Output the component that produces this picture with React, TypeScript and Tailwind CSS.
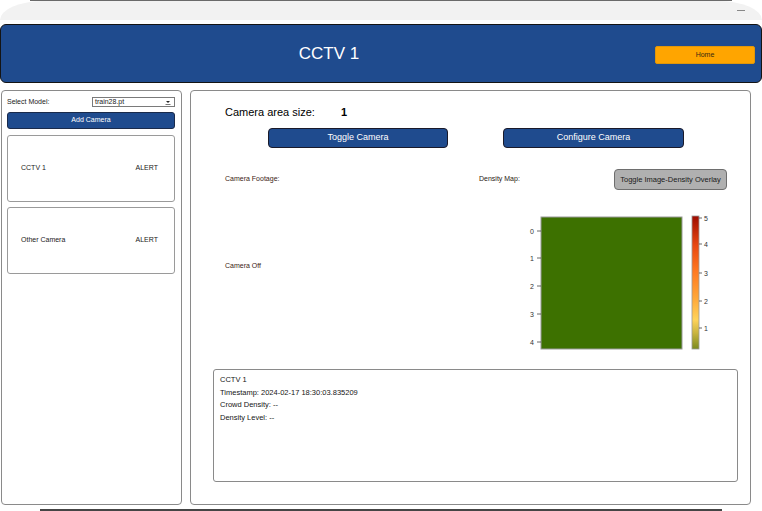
import React from 'react';

const CAMERAS = [
  { name: 'CCTV 1', status: 'ALERT' },
  { name: 'Other Camera', status: 'ALERT' },
];

const INFO_LINES = [
  'CCTV 1',
  'Timestamp: 2024-02-17 18:30:03.835209',
  'Crowd Density: --',
  'Density Level: --',
];

function DensityHeatmap() {
  const rowTicks = [
    { label: '0', y: 41 },
    { label: '1', y: 68 },
    { label: '2', y: 96 },
    { label: '3', y: 124 },
    { label: '4', y: 152 },
  ];
  const barTicks = [
    { label: '5', y: 28 },
    { label: '4', y: 54 },
    { label: '3', y: 83 },
    { label: '2', y: 111 },
    { label: '1', y: 138 },
  ];
  return (
    <svg width="271" height="175" viewBox="0 0 271 175" className="block">
      <defs>
        <linearGradient id="cbar" x1="0" y1="1" x2="0" y2="0">
          <stop offset="0%" stopColor="#7a8a1e" />
          <stop offset="12%" stopColor="#c9b440" />
          <stop offset="22%" stopColor="#ffd35a" />
          <stop offset="38%" stopColor="#ffa83a" />
          <stop offset="58%" stopColor="#ff7a22" />
          <stop offset="78%" stopColor="#e84812" />
          <stop offset="100%" stopColor="#9e0c00" />
        </linearGradient>
      </defs>

      {/* image */}
      <rect x="62" y="27" width="141" height="132" fill="#3d7100" stroke="#9a9a9a" strokeWidth="1" />
      {rowTicks.map((t) => (
        <g key={t.label}>
          <line x1="58" y1={t.y} x2="62" y2={t.y} stroke="#444" strokeWidth="0.8" />
          <text x="55" y={t.y + 2.5} fontSize="7" fill="#333" textAnchor="end" fontFamily="Liberation Sans, sans-serif">
            {t.label}
          </text>
        </g>
      ))}

      {/* colorbar */}
      <rect x="213" y="26" width="7" height="133" fill="url(#cbar)" stroke="#9a9a9a" strokeWidth="0.8" />
      {barTicks.map((t) => (
        <g key={t.label}>
          <line x1="220" y1={t.y} x2="223" y2={t.y} stroke="#444" strokeWidth="0.8" />
          <text x="225" y={t.y + 2.5} fontSize="7" fill="#333" fontFamily="Liberation Sans, sans-serif">
            {t.label}
          </text>
        </g>
      ))}
    </svg>
  );
}

export default function App() {
  return (
    <div className="w-[762px] h-[511px] bg-white overflow-hidden flex flex-col font-['Liberation_Sans',Arial,sans-serif] text-[#1a1a1a]">
      {/* window edge */}
      <div className="h-px mx-[30px] bg-[#6a6a6a]" />
      {/* title bar */}
      <div className="h-[19px] bg-[#f2f2f2] rounded-tl-[44px_19px] rounded-tr-[44px_19px] flex items-center justify-end pr-[17px]">
        <div className="w-[8px] h-px bg-[#888]" />
      </div>

      {/* header */}
      <div className="mt-[4px] h-[59px] bg-[#1f4b8e] border border-[#141414] rounded-[6px] flex items-center">
        <div className="flex-1 text-center text-white text-[17px] pl-[2px]">CCTV 1</div>
        <button className="w-[100px] h-[18px] mr-[6px] mt-[2px] bg-[#ffa500] border border-[#e0960a] rounded-[2px] text-[7px] leading-[16px] text-[#3a2a10] flex items-center justify-center">
          Home
        </button>
      </div>

      {/* body */}
      <div className="mt-[7px] h-[415px] flex">
        {/* sidebar */}
        <div className="ml-[1px] w-[181px] border border-[#8a8a8a] rounded-[4px] pl-[5px] pr-[6px] pt-[6px] flex flex-col">
          <div className="h-[10px] flex items-center text-[7px]">
            <span className="w-[85px]">Select Model:</span>
            <div className="flex-1 h-[10px] border border-[#7a7a7a] flex items-center pl-[2px] pr-[3px] bg-white">
              <span className="flex-1">train28.pt</span>
              <svg width="6" height="5" viewBox="0 0 6 5">
                <path d="M1 1h4L3 3z" fill="#222" />
                <line x1="0.5" y1="4.5" x2="5.5" y2="4.5" stroke="#555" strokeWidth="0.8" />
              </svg>
            </div>
          </div>
          <button className="mt-[5px] h-[17px] bg-[#1f4b8e] border border-[#1a2a4a] rounded-[3px] text-white text-[7px] flex items-center justify-center">
            Add Camera
          </button>
          <div className="mt-[6px] flex flex-col gap-[5px]">
            {CAMERAS.map((c) => (
              <div
                key={c.name}
                className="h-[67px] border border-[#9a9a9a] rounded-[3px] flex items-center justify-between pl-[13px] pr-[16px] text-[7px]"
              >
                <span>{c.name}</span>
                <span>{c.status}</span>
              </div>
            ))}
          </div>
        </div>

        {/* main panel */}
        <div className="ml-[8px] w-[561px] border border-[#8a8a8a] rounded-[4px] pt-[14px] flex flex-col">
          <div className="h-[14px] pl-[34px] flex items-center text-[11px] text-black">
            <span className="w-[116px]">Camera area size:</span>
            <span className="font-bold">1</span>
          </div>

          <div className="mt-[9px] h-[20px] flex pl-[77px] gap-[55px]">
            <button className="w-[180px] h-[20px] bg-[#1f4b8e] border border-[#1a1a2a] rounded-[4px] text-white text-[9px] flex items-center justify-center">
              Toggle Camera
            </button>
            <button className="w-[181px] h-[20px] bg-[#1f4b8e] border border-[#1a1a2a] rounded-[4px] text-white text-[9px] flex items-center justify-center">
              Configure Camera
            </button>
          </div>

          <div className="mt-[21px] h-[200px] flex">
            <div className="w-[288px] pl-[34px] flex flex-col text-[7px] text-[#3b2314]">
              <div className="h-[21px] flex items-center">Camera Footage:</div>
              <div className="mt-[71px] leading-[10px]">Camera Off</div>
            </div>
            <div className="flex-1 flex flex-col">
              <div className="h-[21px] flex items-center text-[7px] text-[#2a1a10]">
                <span>Density Map:</span>
                <button className="ml-auto mr-[23px] w-[113px] h-[21px] bg-[#b0b0b0] border border-[#6e6e6e] rounded-[4px] text-[7.5px] text-[#1a1a1a] flex items-center justify-center">
                  Toggle Image-Density Overlay
                </button>
              </div>
              <DensityHeatmap />
            </div>
          </div>

          <div className="ml-[22px] w-[525px] h-[113px] border border-[#8a8a8a] rounded-[3px] pl-[6px] pt-[4px] text-[7.5px] leading-[12.7px] text-[#151515]">
            {INFO_LINES.map((l) => (
              <div key={l}>{l}</div>
            ))}
          </div>
        </div>
      </div>

      <div className="mt-[4px] h-[2px] mx-[40px] bg-[#454545]" />
    </div>
  );
}
